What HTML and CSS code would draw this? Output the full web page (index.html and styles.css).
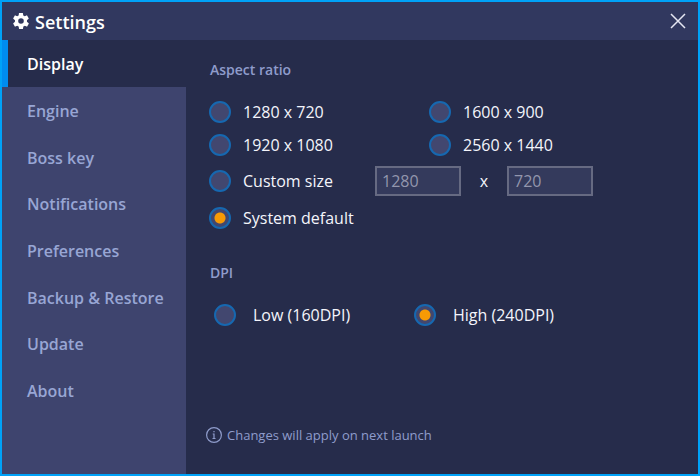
FILE: index.html
```html
<!DOCTYPE html>
<html lang="en">
<head>
  <meta charset="UTF-8">
  <meta name="viewport" content="width=device-width, initial-scale=1.0">
  <title>Settings</title>
  <link rel="stylesheet" href="styles.css">
</head>
<body>
  <div class="window">
    <header class="titlebar">
      <svg class="gear" viewBox="2 2 20 20" aria-hidden="true">
        <path d="M19.4 13c0-.3.1-.6.1-1s0-.7-.1-1l2.100-1.700c.2-.2.300-.4.100-.6l-2-3.500c-.1-.2-.4-.3-.6-.2l-2.500 1c-.5-.4-1.100-.7-1.700-1l-.4-2.600c0-.2-.2-.4-.5-.4h-4c-.2 0-.4.2-.5.4L9.100 5c-.6.3-1.200.6-1.700 1l-2.500-1c-.2-.1-.5 0-.6.2l-2 3.500c-.1.200-.1.500.1.600L4.500 11c0 .3-.1.700-.1 1s0 .7.1 1l-2.100 1.700c-.2.100-.2.400-.1.600l2 3.500c.1.200.4.300.6.200l2.500-1c.5.400 1.100.700 1.700 1l.4 2.600c0 .2.200.4.500.4h4c.2 0 .5-.2.500-.4l.4-2.600c.6-.3 1.200-.6 1.700-1l2.500 1c.2.100.5 0 .6-.2l2-3.500c.1-.2.100-.5-.1-.6L19.400 13zM12 15.500a3.500 3.500 0 1 1 0-7 3.500 3.500 0 0 1 0 7z"/>
      </svg>
      <h1>Settings</h1>
      <button class="close" type="button" aria-label="Close">
        <svg viewBox="0 0 16 16" aria-hidden="true"><path d="M1 1l14 14M15 1L1 15"/></svg>
      </button>
    </header>
    <div class="container">
      <nav class="sidebar">
        <ul>
          <li class="active"><a href="#display">Display</a></li>
          <li><a href="#engine">Engine</a></li>
          <li><a href="#boss-key">Boss key</a></li>
          <li><a href="#notifications">Notifications</a></li>
          <li><a href="#preferences">Preferences</a></li>
          <li><a href="#backup">Backup &amp; Restore</a></li>
          <li><a href="#update">Update</a></li>
          <li><a href="#about">About</a></li>
        </ul>
      </nav>
      <main class="main" id="display">
        <fieldset>
          <legend>Aspect ratio</legend>
          <div class="ratios">
            <label class="option"><input type="radio" name="ratio">1280 x 720</label>
            <label class="option"><input type="radio" name="ratio">1600 x 900</label>
            <label class="option"><input type="radio" name="ratio">1920 x 1080</label>
            <label class="option"><input type="radio" name="ratio">2560 x 1440</label>
          </div>
          <div class="custom">
            <label class="option"><input type="radio" name="ratio">Custom size</label>
            <div class="size">
              <input type="text" value="1280" aria-label="Width" disabled>
              <span>x</span>
              <input type="text" value="720" aria-label="Height" disabled>
            </div>
          </div>
          <label class="option"><input type="radio" name="ratio" checked>System default</label>
        </fieldset>
        <fieldset>
          <legend>DPI</legend>
          <div class="dpi">
            <label class="option"><input type="radio" name="dpi">Low (160DPI)</label>
            <label class="option"><input type="radio" name="dpi" checked>High (240DPI)</label>
          </div>
        </fieldset>
        <p class="note">
          <svg viewBox="0 0 16 16" aria-hidden="true">
            <circle cx="8" cy="8" r="7.400"/>
            <path d="M6.700 7H8v4.500M6.500 11.500h3M7.400 4.700h1.200"/>
          </svg>
          Changes will apply on next launch
        </p>
      </main>
    </div>
  </div>
</body>
</html>
```
FILE: styles.css
```css
* {
  box-sizing: border-box;
}
body {
  margin: 0;
  font-family: "Open Sans", "Noto Sans", sans-serif;
  font-size: 16px;
  color: #f4f5fb;
  background-color: #262c4b;
}
.window {
  min-height: 100vh;
  display: flex;
  flex-direction: column;
  border: 2px solid #00a2f8;
}

.titlebar {
  display: flex;
  align-items: center;
  gap: 6px;
  height: 38px;
  padding: 0 12px 0 11px;
  background-color: #31385f;
}
.titlebar h1 {
  margin: 0;
  padding-top: 2px;
  font-size: 18px;
  line-height: 24px;
  font-weight: 600;
  color: #fff;
}
.gear {
  width: 16px;
  height: 16px;
  fill: #fff;
}
.close {
  display: flex;
  margin-left: auto;
  padding: 0;
  border: 0;
  background: none;
  cursor: pointer;
}
.close svg {
  width: 16px;
  height: 16px;
  stroke: #e4e6f2;
  stroke-width: 1.5;
}

.container {
  flex: 1;
  display: flex;
}
.sidebar {
  width: 184px;
  flex-shrink: 0;
  display: grid;
  grid-template-rows: 86% 1fr;
  background-color: #3e446e;
}
.sidebar ul {
  display: grid;
  grid-auto-rows: 1fr;
  list-style: none;
  margin: 0;
  padding: 0;
}
.sidebar a {
  display: flex;
  align-items: center;
  height: 100%;
  padding: 2px 0 0 19px;
  border-left: 6px solid transparent;
  font-size: 16px;
  font-weight: 600;
  color: #98a6d4;
  text-decoration: none;
}
.sidebar .active a {
  border-left-color: #008cf0;
  background-color: #262c4b;
  color: #fff;
}

.main {
  flex: 1;
  display: flex;
  flex-direction: column;
  padding: 20px 20px 29px 23px;
}
fieldset {
  margin: 0 0 29px;
  padding: 0;
  border: 0;
}
legend {
  margin-bottom: 15px;
  padding: 0 1px;
  font-size: 14px;
  line-height: 20px;
  font-weight: 600;
  color: #8f9ccb;
}
.ratios {
  display: grid;
  grid-template-columns: 220px 1fr;
}
.option {
  display: flex;
  align-items: center;
  gap: 12px;
  height: 33px;
  white-space: nowrap;
}
.option input {
  appearance: none;
  flex-shrink: 0;
  width: 22px;
  height: 22px;
  margin: 0;
  border: 2px solid #1668b0;
  border-radius: 50%;
  background-color: #42476f;
}
.option input:checked {
  background-image: radial-gradient(circle, #f79a05 5px, transparent 6px);
}
.custom {
  display: grid;
  grid-template-columns: 166px 1fr;
  align-items: center;
  height: 40px;
}
.size {
  display: flex;
  align-items: center;
}
.size span {
  width: 46px;
  text-align: center;
}
.size input {
  width: 86px;
  height: 30px;
  padding: 0 5px;
  border: 2px solid #666a82;
  background-color: #343a5c;
  color: #9396ad;
  font: inherit;
}
.dpi {
  display: grid;
  grid-template-columns: 200px 1fr;
  padding-left: 5px;
}
.dpi .option {
  gap: 17px;
}

.note {
  display: flex;
  align-items: center;
  gap: 5px;
  margin: auto 0 0 -3px;
  font-size: 13px;
  line-height: 20px;
  color: #8f9ccb;
}
.note svg {
  width: 16px;
  height: 16px;
  fill: none;
  stroke: #8f9ccb;
  stroke-width: 1.2;
}
```
